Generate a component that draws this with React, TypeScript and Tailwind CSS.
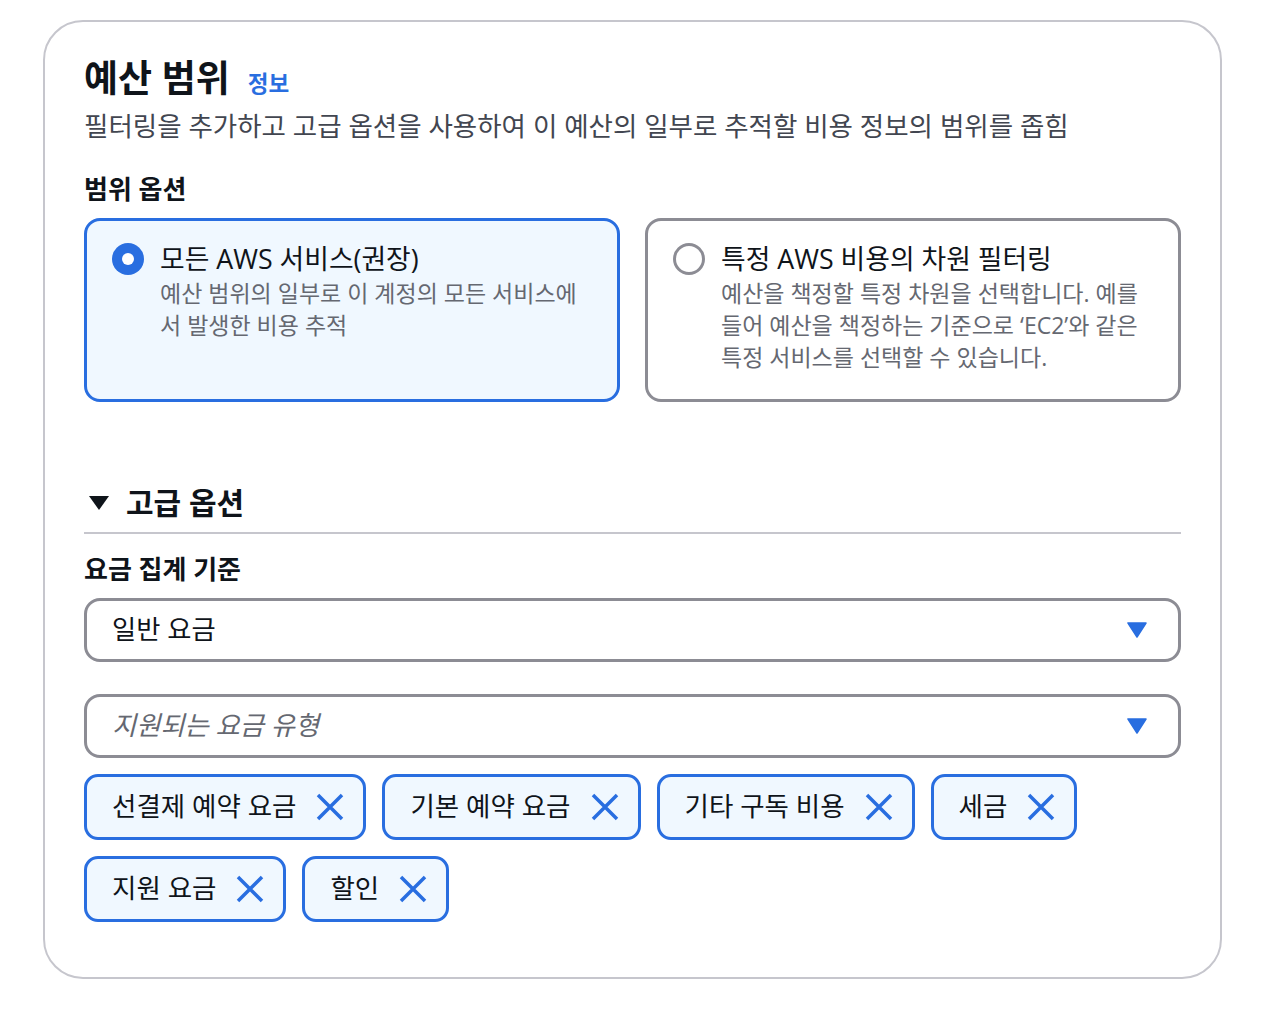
import { ReactNode } from 'react';

const FONT = "font-['Open_Sans','Noto_Sans_CJK_KR',sans-serif]";

function Caret() {
  return (
    <svg width="20" height="16" viewBox="0 0 20 16" className="shrink-0">
      <path d="M1 1 L19 1 L10 15 Z" fill="#296ee0" stroke="#296ee0" strokeWidth="1.5" strokeLinejoin="round" />
    </svg>
  );
}

function XIcon() {
  return (
    <svg width="28" height="28" viewBox="0 0 28 28" className="shrink-0">
      <path d="M2 2 L26 26 M26 2 L2 26" stroke="#296ee0" strokeWidth="3.5" strokeLinecap="butt" />
    </svg>
  );
}

function Radio({ checked }: { checked: boolean }) {
  if (checked) {
    return (
      <div className="w-[32px] h-[32px] rounded-full bg-[#296ee0] flex items-center justify-center shrink-0 mt-[2px]">
        <div className="w-[12px] h-[12px] rounded-full bg-white" />
      </div>
    );
  }
  return <div className="w-[32px] h-[32px] rounded-full border-[3px] border-[#8c8c94] bg-white shrink-0 mt-[2px]" />;
}

function Option({ checked, title, desc }: { checked: boolean; title: string; desc: ReactNode }) {
  return (
    <div
      className={
        checked
          ? 'border-[3px] border-[#296ee0] bg-[#f0f8ff] rounded-[16px] pl-[25px] pr-[30px] pt-[20px] pb-[26px] flex gap-[16px]'
          : 'border-[3px] border-[#8c8c94] bg-white rounded-[16px] pl-[25px] pr-[30px] pt-[20px] pb-[26px] flex gap-[16px]'
      }
    >
      <Radio checked={checked} />
      <div className="flex flex-col">
        <div className="text-[26.8px] leading-[36px] text-[#0f141a]">{title}</div>
        <div className="text-[23px] leading-[32px] text-[#656871]">{desc}</div>
      </div>
    </div>
  );
}

function Token({ label }: { label: string }) {
  return (
    <div className="h-[66px] border-[3px] border-[#296ee0] bg-[#f0f8ff] rounded-[14px] pl-[25px] pr-[19px] flex items-center gap-[20px]">
      <span className="text-[26.5px] text-[#0f141a]">{label}</span>
      <XIcon />
    </div>
  );
}

function Select({ children }: { children: ReactNode }) {
  return (
    <div className="h-[64px] border-[3px] border-[#8c8c94] rounded-[16px] pl-[25px] pr-[31px] flex items-center justify-between bg-white">
      {children}
      <Caret />
    </div>
  );
}

export default function App() {
  const tokens1 = ['선결제 예약 요금', '기본 예약 요금', '기타 구독 비용', '세금'];
  const tokens2 = ['지원 요금', '할인'];

  return (
    <div className={`min-h-screen bg-white pt-[20px] pl-[43px] ${FONT}`}>
      <div className="w-[1179px] border-2 border-[#c6c6cd] rounded-[40px] px-[39px] pt-[32px] pb-[55px]">
        <div className="flex items-baseline gap-[18px] h-[48px]">
          <h1 className="text-[37px] leading-[48px] font-bold text-[#0f141a]">예산 범위</h1>
          <span className="text-[22.5px] font-bold text-[#296ee0]">정보</span>
        </div>
        <p className="mt-[6px] text-[26.5px] leading-[36px] text-[#424650]">
          필터링을 추가하고 고급 옵션을 사용하여 이 예산의 일부로 추적할 비용 정보의 범위를 좁힘
        </p>

        <h2 className="mt-[28px] text-[26px] leading-[34px] font-bold text-[#0f141a]">범위 옵션</h2>
        <div className="mt-[12px] grid grid-cols-2 gap-[25px]">
          <Option checked title="모든 AWS 서비스(권장)" desc="예산 범위의 일부로 이 계정의 모든 서비스에서 발생한 비용 추적" />
          <Option
            checked={false}
            title="특정 AWS 비용의 차원 필터링"
            desc="예산을 책정할 특정 차원을 선택합니다. 예를 들어 예산을 책정하는 기준으로 ‘EC2’와 같은 특정 서비스를 선택할 수 있습니다."
          />
        </div>

        <div className="mt-[81px] flex items-center gap-[16px] pb-[9px] border-b-2 border-[#c6c6cd]">
          <svg width="22" height="16" viewBox="0 0 22 16" className="ml-[4px]">
            <path d="M1 1 L21 1 L11 15 Z" fill="#0f141a" />
          </svg>
          <span className="text-[30px] leading-[40px] font-bold text-[#0f141a]">고급 옵션</span>
        </div>

        <h3 className="mt-[18px] text-[26px] leading-[34px] font-bold text-[#0f141a]">요금 집계 기준</h3>
        <div className="mt-[12px]">
          <Select>
            <span className="text-[26.3px] text-[#0f141a]">일반 요금</span>
          </Select>
        </div>
        <div className="mt-[32px]">
          <Select>
            <span className="text-[26.3px] italic text-[#656871]">지원되는 요금 유형</span>
          </Select>
        </div>

        <div className="mt-[16px] flex flex-col gap-[16px]">
          <div className="flex gap-[16px]">
            {tokens1.map(t => (
              <Token key={t} label={t} />
            ))}
          </div>
          <div className="flex gap-[16px]">
            {tokens2.map(t => (
              <Token key={t} label={t} />
            ))}
          </div>
        </div>
      </div>
    </div>
  );
}
